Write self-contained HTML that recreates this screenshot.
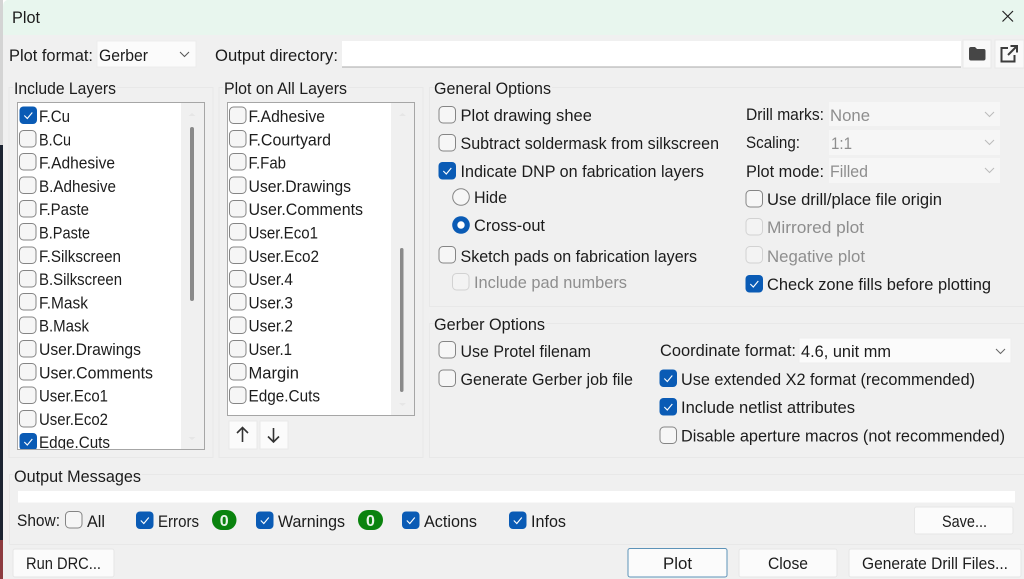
<!DOCTYPE html>
<html><head><meta charset="utf-8"><title>Plot</title>
<style>
html,body{margin:0;padding:0;background:#f0f0f0;width:1024px;height:579px;overflow:hidden}
svg{display:block;position:absolute;left:0;top:0;filter:blur(.3px)}
text{font-family:"Liberation Sans",sans-serif;font-size:16.5px;fill:#1c1c1c}
text.g{fill:#8e8e8e}
</style></head><body>
<svg width="1024" height="579" viewBox="0 0 1024 579" xmlns="http://www.w3.org/2000/svg">
<defs>
<g id="u"><rect x=".5" y=".5" width="16.500" height="16.500" rx="4" fill="#f6f6f6" stroke="#858585"/></g>
<g id="d"><rect x=".5" y=".5" width="16.500" height="16.500" rx="4" fill="#f3f3f3" stroke="#d2d2d2"/></g>
<g id="c"><rect x="0" y="0" width="17.500" height="17.500" rx="4" fill="#0a5bb5"/><path d="M4.800 9l3 3 5-6" fill="none" stroke="#fff" stroke-width="1.100"/></g>
<clipPath id="clipL"><rect x="18" y="103" width="163" height="346"/></clipPath>
<clipPath id="clipS"><rect x="458" y="100" width="133" height="30"/></clipPath>
</defs>
<rect width="1024" height="579" fill="#f0f0f0"/>
<!-- left edge -->
<rect x="0" y="0" width="3" height="145" fill="#d4d4d4"/>
<rect x="0" y="145" width="3" height="395" fill="#1b2331"/>
<rect x="0" y="540" width="3" height="39" fill="#8d3b3f"/>
<!-- title bar -->
<rect x="3" y="0" width="1021" height="35" fill="#e8f6ee"/>
<path d="M0 0h7q-4 1-4 7v-7z" fill="#fff"/>
<text x="12" y="23" textLength="28" lengthAdjust="spacingAndGlyphs">Plot</text>
<path d="M1002.500 11l10.500 10.500M1013 11l-10.500 10.500" stroke="#222" stroke-width="1.200" fill="none"/>
<!-- top row -->
<text x="9" y="61" textLength="84" lengthAdjust="spacingAndGlyphs">Plot format:</text>
<rect x="97" y="41" width="99" height="26" fill="#fbfbfb" stroke="#ececec"/>
<text x="99" y="61" textLength="49" lengthAdjust="spacingAndGlyphs">Gerber</text>
<path d="M180 52l4.500 4.500 4.500-4.500" fill="none" stroke="#555" stroke-width="1"/>
<text x="215" y="61" textLength="123" lengthAdjust="spacingAndGlyphs">Output directory:</text>
<rect x="342" y="41" width="619" height="26" fill="#fff"/>
<rect x="342" y="66.500" width="619" height="1" fill="#a8a8a8"/>
<rect x="963" y="40" width="28" height="28" fill="#f9f9f9" stroke="#e9e9e9"/>
<rect x="995" y="40" width="29" height="28" fill="#f9f9f9" stroke="#e9e9e9"/>
<path d="M969 49q0-2 2-2h4l2 2h7q1.500 0 1.500 2v7.500q0 2-2 2h-12.500q-2 0-2-2z" fill="#464646"/>
<path d="M1008 48h-6.500v13.500h13v-6.500" fill="none" stroke="#3c3c3c" stroke-width="2"/>
<path d="M1008 55l8-8M1010.500 46h6.500v6.500" fill="none" stroke="#3c3c3c" stroke-width="2"/>
<!-- group frames -->
<g fill="none" stroke="#e8e8e8">
<path d="M117 87.500h96v370h-204v-370h4"/>
<path d="M348 87.500h75v370h-204v-370h4"/>
<path d="M552 87.500h472M1024 306.500h-594.500v-219h4"/>
<path d="M546 323.500h478M1024 457.500h-594.500v-134h4"/>
<path d="M142 474.500h882M9.500 544.500v-70h4"/>
<path d="M9.500 544.500h1014.500"/>
</g>
<!-- Include layers -->
<text x="14" y="94" textLength="102" lengthAdjust="spacingAndGlyphs">Include Layers</text>
<rect x="17.500" y="102.500" width="187" height="347" fill="#f0f0f0" stroke="#a6a6a6"/>
<rect x="18" y="103" width="163" height="346" fill="#fff"/>
<rect x="190" y="127" width="4" height="174" rx="2" fill="#8a8a8a"/>
<path d="M188.500 116l3.500-3 3.500 3zM188.500 437l3.500 3 3.500-3z" fill="#e6e6e6"/>
<g clip-path="url(#clipL)">
<use href="#c" x="19.500" y="106.500"/><text x="39" y="122" textLength="31" lengthAdjust="spacingAndGlyphs">F.Cu</text>
<use href="#u" x="19" y="130"/><text x="39" y="145.300" textLength="32" lengthAdjust="spacingAndGlyphs">B.Cu</text>
<use href="#u" x="19" y="153"/><text x="39" y="168.600" textLength="76" lengthAdjust="spacingAndGlyphs">F.Adhesive</text>
<use href="#u" x="19" y="176.500"/><text x="39" y="191.900" textLength="77" lengthAdjust="spacingAndGlyphs">B.Adhesive</text>
<use href="#u" x="19" y="200"/><text x="39" y="215.200" textLength="50" lengthAdjust="spacingAndGlyphs">F.Paste</text>
<use href="#u" x="19" y="223"/><text x="39" y="238.500" textLength="51" lengthAdjust="spacingAndGlyphs">B.Paste</text>
<use href="#u" x="19" y="246.500"/><text x="39" y="261.800" textLength="82" lengthAdjust="spacingAndGlyphs">F.Silkscreen</text>
<use href="#u" x="19" y="270"/><text x="39" y="285.100" textLength="83" lengthAdjust="spacingAndGlyphs">B.Silkscreen</text>
<use href="#u" x="19" y="293"/><text x="39" y="308.400" textLength="49" lengthAdjust="spacingAndGlyphs">F.Mask</text>
<use href="#u" x="19" y="316.500"/><text x="39" y="331.700" textLength="50" lengthAdjust="spacingAndGlyphs">B.Mask</text>
<use href="#u" x="19" y="340"/><text x="39" y="355" textLength="102" lengthAdjust="spacingAndGlyphs">User.Drawings</text>
<use href="#u" x="19" y="363"/><text x="39" y="378.300" textLength="114" lengthAdjust="spacingAndGlyphs">User.Comments</text>
<use href="#u" x="19" y="386.500"/><text x="39" y="401.600" textLength="69" lengthAdjust="spacingAndGlyphs">User.Eco1</text>
<use href="#u" x="19" y="410"/><text x="39" y="424.900" textLength="69" lengthAdjust="spacingAndGlyphs">User.Eco2</text>
<use href="#c" x="19.500" y="433"/><text x="39" y="448.200" textLength="71" lengthAdjust="spacingAndGlyphs">Edge.Cuts</text>
</g>
<!-- Plot on all layers -->
<text x="224" y="94" textLength="123" lengthAdjust="spacingAndGlyphs">Plot on All Layers</text>
<rect x="227.500" y="102.500" width="187" height="313" fill="#f0f0f0" stroke="#a6a6a6"/>
<rect x="228" y="103" width="163" height="312" fill="#fff"/>
<rect x="400" y="248" width="3.500" height="144" rx="1.700" fill="#8a8a8a"/>
<path d="M399 116l3.500-3 3.500 3zM399 403l3.500 3 3.500-3z" fill="#e6e6e6"/>
<use href="#u" x="229" y="106.500"/><text x="248.500" y="122" textLength="76.500" lengthAdjust="spacingAndGlyphs">F.Adhesive</text>
<use href="#u" x="229" y="130"/><text x="248.500" y="145.300" textLength="82.500" lengthAdjust="spacingAndGlyphs">F.Courtyard</text>
<use href="#u" x="229" y="153"/><text x="248.500" y="168.600" textLength="37.500" lengthAdjust="spacingAndGlyphs">F.Fab</text>
<use href="#u" x="229" y="176.500"/><text x="248.500" y="191.900" textLength="102.500" lengthAdjust="spacingAndGlyphs">User.Drawings</text>
<use href="#u" x="229" y="200"/><text x="248.500" y="215.200" textLength="114.500" lengthAdjust="spacingAndGlyphs">User.Comments</text>
<use href="#u" x="229" y="223"/><text x="248.500" y="238.500" textLength="69.500" lengthAdjust="spacingAndGlyphs">User.Eco1</text>
<use href="#u" x="229" y="246.500"/><text x="248.500" y="261.800" textLength="70.500" lengthAdjust="spacingAndGlyphs">User.Eco2</text>
<use href="#u" x="229" y="270"/><text x="248.500" y="285.100" textLength="44.500" lengthAdjust="spacingAndGlyphs">User.4</text>
<use href="#u" x="229" y="293"/><text x="248.500" y="308.400" textLength="44.500" lengthAdjust="spacingAndGlyphs">User.3</text>
<use href="#u" x="229" y="316.500"/><text x="248.500" y="331.700" textLength="44.500" lengthAdjust="spacingAndGlyphs">User.2</text>
<use href="#u" x="229" y="340"/><text x="248.500" y="355" textLength="43.500" lengthAdjust="spacingAndGlyphs">User.1</text>
<use href="#u" x="229" y="363"/><text x="248.500" y="378.300" textLength="50.500" lengthAdjust="spacingAndGlyphs">Margin</text>
<use href="#u" x="229" y="386.500"/><text x="248.500" y="401.600" textLength="71.500" lengthAdjust="spacingAndGlyphs">Edge.Cuts</text>
<rect x="229" y="421" width="28" height="28" fill="#fbfbfb" stroke="#e9e9e9"/>
<rect x="260" y="421" width="28" height="28" fill="#fbfbfb" stroke="#e9e9e9"/>
<path d="M242.500 442v-14M237 433l5.500-5.500 5.500 5.500M273.500 428v14M268 436.500l5.500 5.500 5.500-5.500" fill="none" stroke="#333" stroke-width="1.600"/>
<!-- General options -->
<text x="434" y="94" textLength="117" lengthAdjust="spacingAndGlyphs">General Options</text>
<use href="#u" x="438.500" y="106"/><g clip-path="url(#clipS)"><text x="460.500" y="121" textLength="136" lengthAdjust="spacingAndGlyphs">Plot drawing sheet</text></g>
<use href="#u" x="438.500" y="134"/><text x="460.500" y="149" textLength="258.500" lengthAdjust="spacingAndGlyphs">Subtract soldermask from silkscreen</text>
<use href="#c" x="438.500" y="162"/><text x="460.500" y="177" textLength="243.500" lengthAdjust="spacingAndGlyphs">Indicate DNP on fabrication layers</text>
<circle cx="461" cy="197" r="8.300" fill="#f6f6f6" stroke="#858585"/><text x="474" y="203" textLength="33" lengthAdjust="spacingAndGlyphs">Hide</text>
<circle cx="461" cy="225" r="8.800" fill="#0a5bb5"/><circle cx="461" cy="225" r="3.700" fill="#fff"/><text x="474" y="231" textLength="71" lengthAdjust="spacingAndGlyphs">Cross-out</text>
<use href="#u" x="438.500" y="246"/><text x="460.500" y="262" textLength="236.500" lengthAdjust="spacingAndGlyphs">Sketch pads on fabrication layers</text>
<use href="#d" x="452" y="273"/><text class="g" x="474" y="288" textLength="153" lengthAdjust="spacingAndGlyphs">Include pad numbers</text>
<text x="746" y="120" textLength="78" lengthAdjust="spacingAndGlyphs">Drill marks:</text>
<rect x="829" y="102" width="171" height="24" fill="#f6f6f6"/>
<text class="g" x="830" y="121" textLength="40" lengthAdjust="spacingAndGlyphs">None</text>
<path d="M985 112l4.500 4.500 4.500-4.500" fill="none" stroke="#bbb"/>
<text x="746" y="148" textLength="54" lengthAdjust="spacingAndGlyphs">Scaling:</text>
<rect x="829" y="130" width="171" height="25" fill="#f6f6f6"/>
<text class="g" x="831" y="149" textLength="21" lengthAdjust="spacingAndGlyphs">1:1</text>
<path d="M985 140l4.500 4.500 4.500-4.500" fill="none" stroke="#bbb"/>
<text x="746" y="177" textLength="78" lengthAdjust="spacingAndGlyphs">Plot mode:</text>
<rect x="829" y="158" width="171" height="25" fill="#f6f6f6"/>
<text class="g" x="830" y="177" textLength="38" lengthAdjust="spacingAndGlyphs">Filled</text>
<path d="M985 168l4.500 4.500 4.500-4.500" fill="none" stroke="#bbb"/>
<use href="#u" x="745.500" y="190"/><text x="767" y="205" textLength="175" lengthAdjust="spacingAndGlyphs">Use drill/place file origin</text>
<use href="#d" x="745.500" y="218"/><text class="g" x="767" y="233" textLength="97" lengthAdjust="spacingAndGlyphs">Mirrored plot</text>
<use href="#d" x="745.500" y="246"/><text class="g" x="767" y="262" textLength="98" lengthAdjust="spacingAndGlyphs">Negative plot</text>
<use href="#c" x="745.500" y="275"/><text x="767" y="290" textLength="224" lengthAdjust="spacingAndGlyphs">Check zone fills before plotting</text>
<!-- Gerber options -->
<text x="434" y="330" textLength="111" lengthAdjust="spacingAndGlyphs">Gerber Options</text>
<use href="#u" x="438.500" y="341"/><text x="460.500" y="357" textLength="130.500" lengthAdjust="spacingAndGlyphs">Use Protel filenam</text>
<use href="#u" x="438.500" y="369.500"/><text x="460.500" y="385" textLength="172.500" lengthAdjust="spacingAndGlyphs">Generate Gerber job file</text>
<text x="660" y="356" textLength="136" lengthAdjust="spacingAndGlyphs">Coordinate format:</text>
<rect x="799" y="338" width="212" height="25" fill="#fbfbfb" stroke="#eeeeee"/>
<text x="801" y="357" textLength="90" lengthAdjust="spacingAndGlyphs">4.6, unit mm</text>
<path d="M996 349l4.500 4.500 4.500-4.500" fill="none" stroke="#666"/>
<use href="#c" x="659.500" y="369.500"/><text x="681" y="385" textLength="294" lengthAdjust="spacingAndGlyphs">Use extended X2 format (recommended)</text>
<use href="#c" x="659.500" y="398"/><text x="681" y="413" textLength="174" lengthAdjust="spacingAndGlyphs">Include netlist attributes</text>
<use href="#u" x="659.500" y="426.500"/><text x="681" y="441.500" textLength="324" lengthAdjust="spacingAndGlyphs">Disable aperture macros (not recommended)</text>
<!-- Output messages -->
<text x="14" y="482" textLength="127" lengthAdjust="spacingAndGlyphs">Output Messages</text>
<rect x="18" y="491" width="997" height="11.500" fill="#fff"/>
<text x="17" y="526" textLength="43" lengthAdjust="spacingAndGlyphs">Show:</text>
<use href="#u" x="65" y="511"/><text x="87" y="527" textLength="18" lengthAdjust="spacingAndGlyphs">All</text>
<use href="#c" x="136" y="511.500"/><text x="158" y="527" textLength="41" lengthAdjust="spacingAndGlyphs">Errors</text>
<rect x="212" y="510" width="24.500" height="20" rx="10" fill="#0a830e"/>
<text x="224.200" y="526" text-anchor="middle" style="font-weight:700;font-size:16px;fill:#e8f3e8">0</text>
<use href="#c" x="256" y="511.500"/><text x="278" y="527" textLength="67" lengthAdjust="spacingAndGlyphs">Warnings</text>
<rect x="358" y="510" width="25" height="20" rx="10" fill="#0a830e"/>
<text x="370.500" y="526" text-anchor="middle" style="font-weight:700;font-size:16px;fill:#e8f3e8">0</text>
<use href="#c" x="402" y="511.500"/><text x="424" y="527" textLength="53" lengthAdjust="spacingAndGlyphs">Actions</text>
<use href="#c" x="509" y="511.500"/><text x="531" y="527" textLength="35" lengthAdjust="spacingAndGlyphs">Infos</text>
<rect x="914.500" y="507" width="98.500" height="27" rx="2" fill="#fbfbfb" stroke="#e6e6e6"/>
<text x="942" y="527" textLength="45" lengthAdjust="spacingAndGlyphs">Save...</text>
<!-- bottom buttons -->
<rect x="13" y="549" width="101" height="28" rx="2" fill="#fbfbfb" stroke="#e6e6e6"/>
<text x="26" y="569" textLength="75" lengthAdjust="spacingAndGlyphs">Run DRC...</text>
<rect x="628" y="548.500" width="99" height="28.500" rx="2" fill="#fbfbfb" stroke="#5d93b8"/>
<text x="663" y="569" textLength="29" lengthAdjust="spacingAndGlyphs">Plot</text>
<rect x="739" y="549" width="98" height="28" rx="2" fill="#fbfbfb" stroke="#e6e6e6"/>
<text x="768" y="569" textLength="40" lengthAdjust="spacingAndGlyphs">Close</text>
<rect x="849" y="549" width="172" height="28" rx="2" fill="#fbfbfb" stroke="#e6e6e6"/>
<text x="862" y="569" textLength="146" lengthAdjust="spacingAndGlyphs">Generate Drill Files...</text>
</svg>
</body></html>
